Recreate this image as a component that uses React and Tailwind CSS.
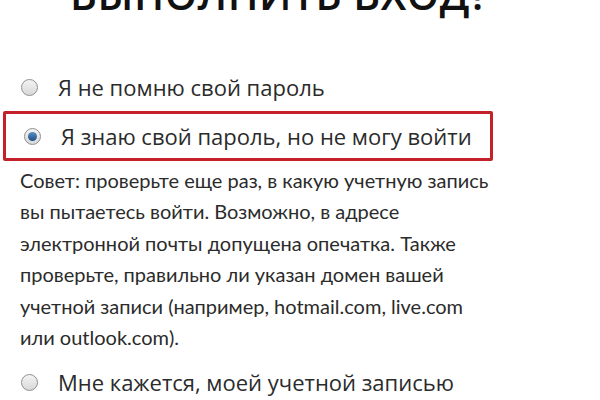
import React from 'react';

const Radio = ({ checked }) => (
  <span className="relative inline-block w-[17px] h-[17px] shrink-0 rounded-full border border-[#8f8f8f] bg-gradient-to-b from-[#f4f4f4] to-[#d8d8d8]">
    {checked && (
      <span className="absolute left-[3px] top-[3px] w-[9px] h-[9px] rounded-full bg-gradient-to-b from-[#5b8fc4] to-[#1e4f86]" />
    )}
  </span>
);

const Option = ({ checked, children }) => (
  <div className="flex items-center gap-[20px] pl-[21px]">
    <Radio checked={checked} />
    <span className="text-[22px] leading-[30px] text-[#2b2b2b]">{children}</span>
  </div>
);

export default function App() {
  return (
    <div className="w-[600px] h-[400px] overflow-hidden bg-white font-['Open_Sans',sans-serif]">
      <h1 className="mt-[-28px] pl-[70px] text-[41px] leading-[44px] font-semibold text-[#111] tracking-[0.5px]">
        ВЫПОЛНИТЬ ВХОД?
      </h1>

      <div className="mt-[56px]">
        <Option>Я не помню свой пароль</Option>
      </div>

      <div className="mt-[9px] ml-[3px] w-[490px] h-[50px] flex items-center border-[3px] border-[#c4212b] rounded-[2px]">
        <div className="-ml-[3px]">
          <Option checked>Я знаю свой пароль, но не могу войти</Option>
        </div>
      </div>

      <p className="mt-[4px] pl-[20px] w-[500px] font-['Lato',sans-serif] text-[20px] leading-[31.4px] text-[#2b2b2b]">
        Совет: проверьте еще раз, в какую учетную запись вы пытаетесь войти. Возможно, в адресе электронной почты допущена опечатка. Также проверьте, правильно ли указан домен вашей учетной записи (например, hotmail.com, live.com или outlook.com).
      </p>

      <div className="mt-[14px]">
        <Option>Мне кажется, моей учетной записью</Option>
      </div>
    </div>
  );
}
